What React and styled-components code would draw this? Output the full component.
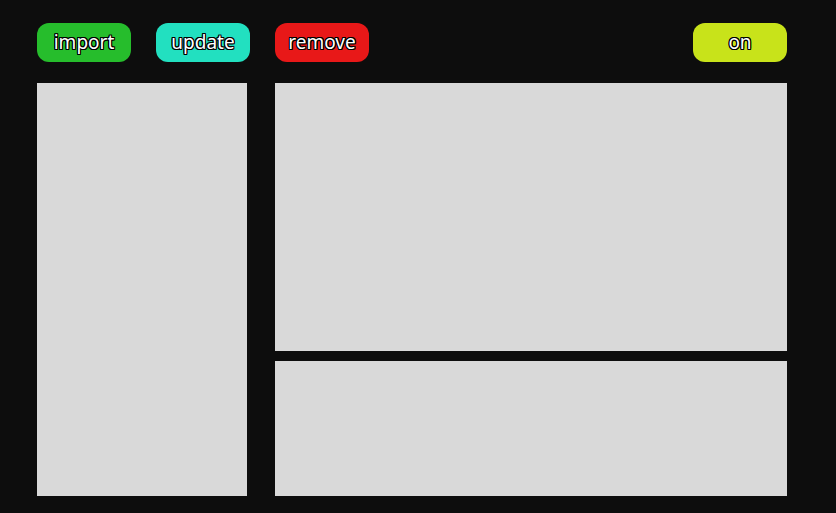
import React from 'react';
import styled, { createGlobalStyle } from 'styled-components';

const GlobalStyle = createGlobalStyle`
  html, body {
    margin: 0;
    padding: 0;
    background: #0d0d0d;
    font-family: "Noto Sans", "Liberation Sans", sans-serif;
  }
`;

const Page = styled.div`
  width: 750px;
  padding: 23px 49px 17px 37px;
  display: flex;
  flex-direction: column;
  gap: 21px;
`;

const Toolbar = styled.div`
  display: flex;
  align-items: center;
  gap: 25px;
`;

const Spacer = styled.div`
  flex: 1;
`;

const ActionButton = styled.button`
  width: 94px;
  height: 39px;
  border: none;
  border-radius: 12px;
  background: ${(p) => p.$color};
  color: #fff;
  font-family: "Noto Sans", "Liberation Sans", sans-serif;
  font-size: 19px;
  padding: 0 0 2px;
  cursor: pointer;
  text-shadow:
    -1px -1px 0 #000, 1px -1px 0 #000, -1px 1px 0 #000, 1px 1px 0 #000,
    0 -1px 0 #000, 0 1px 0 #000, -1px 0 0 #000, 1px 0 0 #000;
`;

const Body = styled.div`
  display: flex;
  gap: 28px;
  height: 413px;
`;

const Panel = styled.div`
  background: #d9d9d9;
  flex: ${(p) => p.$flex || 'none'};
`;

const SidePanel = styled(Panel)`
  width: 210px;
`;

const MainColumn = styled.div`
  flex: 1;
  display: flex;
  flex-direction: column;
  gap: 10px;
`;

const App = () => {
  return (
    <>
      <GlobalStyle />
      <Page>
        <Toolbar>
          <ActionButton $color="#26bd2c">import</ActionButton>
          <ActionButton $color="#22e0c0">update</ActionButton>
          <ActionButton $color="#e81818">remove</ActionButton>
          <Spacer />
          <ActionButton $color="#c8e31a">on</ActionButton>
        </Toolbar>
        <Body>
          <SidePanel />
          <MainColumn>
            <Panel style={{ height: 268 }} />
            <Panel $flex="1" />
          </MainColumn>
        </Body>
      </Page>
    </>
  );
};

export default App;
